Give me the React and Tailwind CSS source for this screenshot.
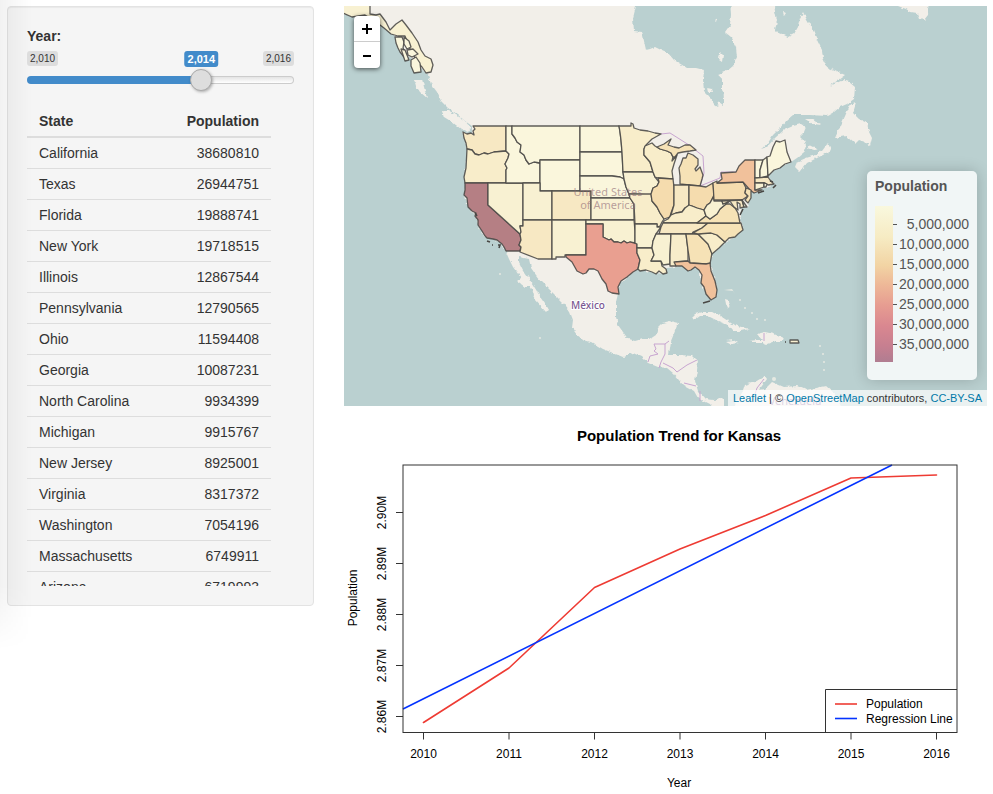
import { useState } from "react";

const STATE_ROWS = [
  ["California", 38680810],
  ["Texas", 26944751],
  ["Florida", 19888741],
  ["New York", 19718515],
  ["Illinois", 12867544],
  ["Pennsylvania", 12790565],
  ["Ohio", 11594408],
  ["Georgia", 10087231],
  ["North Carolina", 9934399],
  ["Michigan", 9915767],
  ["New Jersey", 8925001],
  ["Virginia", 8317372],
  ["Washington", 7054196],
  ["Massachusetts", 6749911],
  ["Arizona", 6719993],
];

const C = {
  a: "#faf6dc",
  b: "#f8f1d2",
  c: "#f8edca",
  d: "#f7e8c3",
  e: "#f6e2b6",
  f: "#f5dcae",
  g: "#f1c19b",
  h: "#e99f90",
  i: "#b57f84",
};

// [name, fill, outline]
const STATES = [
  ["WA", C.d, "463,132 467,134 471,133 474,135 473,131 475,129 473,126 506,126 506,151 494,152 488,154 484,153 479,155 475,154 472,150 467,149 466,143 464,138"],
  ["OR", C.c, "467,149 472,150 475,154 479,155 484,153 488,154 494,152 506,151 509,154 508,158 505,164 507,168 506,170 506,183 465,183 464,177 466,168"],
  ["CA", C.i, "465,183 488,183 488,205 520,234 521,240 519,245 521,247 520,251 506,251 504,247 502,244 497,240 493,239 487,238 485,236 482,231 478,225 478,220 475,216 476,213 472,211 468,207 467,198 464,195 465,190"],
  ["NV", C.b, "488,183 523,183 523,226 520,226 521,232 520,234 488,205"],
  ["ID", C.a, "506,126 512,126 512,134 515,138 517,142 521,145 520,152 524,155 526,160 529,164 534,162 540,163 540,183 506,183 506,170 507,168 505,164 508,158 509,154 506,151"],
  ["MT", C.a, "512,126 580,126 580,160 540,160 540,163 534,162 529,164 526,160 524,155 520,152 521,145 517,142 515,138 512,134"],
  ["WY", C.a, "540,160 580,160 580,191 540,191"],
  ["UT", C.b, "523,183 540,183 540,191 552,191 552,220 523,220"],
  ["CO", C.d, "552,191 591,191 591,220 552,220"],
  ["AZ", C.d, "523,220 552,220 552,259 538,259 520,252 521,247 519,245 521,240 520,234 521,232 520,226 523,226"],
  ["NM", C.b, "552,220 586,220 586,255 565,255 565,257 556,257 556,259 552,259"],
  ["ND", C.a, "580,126 619,126 620,132 621,140 622,152 580,152"],
  ["SD", C.a, "580,152 622,152 623,172 624,179 620,177 612,176 580,176"],
  ["NE", C.a, "580,176 612,176 620,177 624,179 626,187 629,194 630,198 591,198 591,191 580,191"],
  ["KS", C.b, "591,198 630,198 632,201 634,204 634,220 591,220"],
  ["OK", C.b, "586,220 634,220 635,231 635,243 630,242 627,243 624,241 621,243 618,242 614,242 611,239 609,240 603,237 603,224 586,224"],
  ["TX", C.h, "586,224 603,224 603,237 609,240 611,239 614,242 618,242 621,243 624,241 627,243 630,242 637,244 637,253 640,260 638,269 633,272 627,277 621,281 618,287 619,294 612,293 608,291 606,284 602,279 598,271 594,269 589,269 586,273 583,274 577,271 572,262 566,257 566,255 586,255"],
  ["MN", C.c, "619,126 631,126 631,123 633,124 634,128 640,130 648,131 655,133 661,134 652,139 646,145 644,149 644,155 650,162 653,172 623,172 622,152 621,140 620,132"],
  ["IA", C.b, "623,172 653,172 655,177 659,182 657,186 653,188 651,195 629,194 626,187 624,179"],
  ["MO", C.c, "629,194 651,194 652,201 657,207 660,213 664,219 662,222 660,226 657,227 657,224 635,224 634,204 630,198"],
  ["AR", C.b, "635,224 657,224 657,227 661,227 656,234 653,241 652,248 637,248 637,244 635,243"],
  ["LA", C.c, "637,248 652,248 654,255 651,261 661,261 662,266 666,269 667,273 663,274 659,271 656,274 652,272 646,270 640,271 638,269 640,260 637,253"],
  ["WI", C.c, "645,146 652,143 655,146 660,149 667,151 671,153 673,157 672,161 677,155 674,164 672,171 673,179 658,178 655,177 653,172 650,162 644,155 644,149"],
  ["MI-UP", C.e, "657,147 664,144 671,139 668,145 674,147 679,148 685,145 690,145 696,150 690,151 683,152 678,153 675,157 673,157 671,153 667,151 660,149"],
  ["MI", C.e, "680,184 680,176 679,168 681,164 683,158 686,158 688,153 693,155 698,159 698,165 695,169 696,171 700,167 703,175 702,179 700,186 689,185"],
  ["IL", C.f, "658,178 673,179 674,187 674,205 671,213 670,217 664,219 660,213 657,207 652,201 651,194 653,188 657,186 659,182"],
  ["IN", C.d, "674,185 689,185 689,206 685,208 682,212 676,213 671,215 674,205"],
  ["OH", C.f, "689,185 700,186 706,187 713,183 714,195 710,203 707,205 704,210 697,208 692,206 689,206"],
  ["KY", C.c, "664,221 668,219 671,215 676,213 682,212 685,208 689,205 692,206 697,208 704,210 706,216 697,223 663,223"],
  ["TN", C.d, "663,223 708,223 702,228 693,232 692,234 659,234 661,227"],
  ["MS", C.b, "659,234 671,234 670,255 670,264 663,265 661,261 651,261 654,255 652,248 653,241 656,234"],
  ["AL", C.c, "671,234 686,234 688,250 688,261 676,262 676,266 670,266 670,255"],
  ["GA", C.e, "686,234 698,234 702,238 708,244 712,253 710,264 706,264 690,263 688,250"],
  ["FL", C.g, "674,262 688,261 690,263 706,264 710,263 711,271 715,281 717,290 716,297 711,300 706,294 704,287 701,283 702,275 699,270 695,267 691,270 688,271 682,266 676,266"],
  ["SC", C.c, "698,234 704,233 711,233 717,235 725,242 719,248 712,254 708,244 702,238"],
  ["NC", C.e, "693,233 702,228 708,223 741,223 743,230 738,234 735,237 729,238 725,242 717,235 711,233 698,234"],
  ["VA", C.e, "697,223 706,216 710,219 717,214 720,209 726,204 730,204 735,208 738,213 740,223"],
  ["WV", C.b, "704,210 707,205 710,203 714,196 714,201 722,201 723,204 730,201 726,204 720,209 717,214 710,219 706,216"],
  ["PA", C.f, "713,183 717,181 717,183 743,182 746,188 745,193 748,196 742,200 714,200"],
  ["NY", C.g, "717,183 722,179 721,173 736,172 739,166 745,160 755,160 755,190 762,190 754,193 750,190 743,182"],
  ["NJ", C.e, "746,188 751,190 751,198 748,203 745,200 748,196 745,193"],
  ["MD", C.d, "722,201 742,200 744,207 740,208 740,204 737,202 738,210 734,207 730,201 723,204"],
  ["DE", C.a, "742,200 744,207 747,207"],
  ["VT", C.a, "755,160 763,160 760,170 760,178 755,178"],
  ["NH", C.a, "763,160 767,157 768,176 760,178 760,170"],
  ["MA", C.d, "755,178 768,177 770,180 774,184 768,185 765,183 755,183"],
  ["CT", C.b, "755,183 764,183 764,187 755,190"],
  ["RI", C.a, "764,183 767,184 766,187 764,187"],
  ["ME", C.a, "767,157 770,156 773,147 776,141 780,142 785,140 787,152 791,162 785,164 780,168 774,170 768,176"],
  ["AK", C.b, "343,5 370,5 370,14 376,15 380,14 386,22 390,30 396,24 402,20 406,25 412,33 418,42 421,50 425,56 431,59 433,65 431,72 426,73 422,67 417,62 413,54 409,47 405,36 398,36 391,34 384,28 376,22 365,15 352,17 343,13"],
  ["AK-1", C.a, "395,37 402,37 404,42 403,48 406,54 404,57 400,52 398,48 396,43"],
  ["AK-2", C.a, "404,37 409,41 411,47 407,49 404,44"],
  ["AK-3", C.a, "407,50 413,49 418,54 412,57 408,55"],
  ["AK-4", C.a, "411,60 416,57 420,63 421,72 414,73 411,66"],
  ["AK-5", C.a, "401,49 405,50 409,60 405,61"],
  ["PR", C.b, "790,340 798,340 799,343 790,343"],
];

const MAINLAND =
  "330,-10 774,-10 774,6 777,20 775,31 780,33 788,37 794,34 798,27 800,18 803,12 807,20 813,30 817,40 822,50 823,58 827,67 836,71 845,75 838,80 830,86 843,80 849,82 855,87 854,99 847,104 840,107 834,112 827,116 810,115 793,115 787,120 780,128 773,135 768,143 761,149 767,147 775,138 784,130 793,126 801,124 806,127 804,132 800,136 804,140 806,145 803,153 797,158 791,162 785,164 777,168 768,176 774,184 764,188 751,192 751,198 747,207 742,208 740,215 743,230 735,237 725,242 712,254 710,264 715,281 717,296 711,300 704,289 701,282 700,272 695,267 688,271 682,266 667,268 663,274 650,272 638,269 627,277 619,285 618,294 616,302 616,317 618,325 623,332 628,339 635,341 642,339 650,339 656,335 658,327 662,323 670,321 678,323 675,331 671,341 669,355 680,355 693,356 698,361 697,370 695,381 698,391 705,399 714,400 724,397 724,412 716,412 710,404 698,398 694,391 683,385 673,373 667,368 658,367 648,363 642,357 633,353 623,357 613,353 603,349 593,343 583,340 577,335 572,328 573,320 570,312 562,302 550,290 542,282 536,275 531,268 529,259 519,257 519,262 523,270 530,280 538,293 545,303 549,310 546,312 534,299 535,295 530,287 525,287 517,281 521,278 513,267 509,259 506,252 502,244 493,239 485,237 478,225 475,215 468,207 464,192 466,183 464,177 467,160 467,149 463,132 472,134 472,126 465,121 457,114 448,108 441,101 437,92 431,84 428,75 418,66 405,50 396,37 384,28 372,19 352,17 330,10";

const ISLANDS = [
  "414,79 422,79 424,87 427,98 420,92 416,86",
  "442,110 448,110 456,115 464,120 471,128 468,132 461,129 452,122 444,117",
  "795,167 797,162 806,158 816,155 822,151 828,143 831,150 823,155 807,163 800,172",
  "805,119 812,119 820,125 813,124",
  "810,145 818,149 814,150 808,148",
  "850,105 856,103 853,113 859,119 867,123 869,132 872,138 870,146 865,142 859,140 855,144 846,136 835,138 841,125",
  "898,6 906,9 911,12 917,13 919,19 924,20 928,15 929,-4 890,-4",
  "691,318 695,314 703,312 712,312 722,317 734,325 749,329 740,331 733,331 728,325 718,321 708,316 700,316 696,319",
  "749,341 757,340 762,340 757,334 765,332 774,334 783,338 782,341 775,341 767,344 762,342 750,342",
  "726,341 733,340 738,343 732,344",
  "725,299 728,300 731,307 728,309 726,304",
  "733,414 736,402 742,394 745,385 755,382 765,376 767,379 759,390 765,389 772,382 784,387 797,386 806,390 820,387 826,386 834,393 845,414",
];

const BAY =
  "636,-4 636,6 633,18 634,31 642,32 646,50 650,49 655,47 661,50 668,53 674,60 687,68 696,68 704,70 703,80 704,91 710,97 714,104 717,106 719,102 723,105 723,99 725,95 722,90 722,80 719,74 727,71 733,66 737,57 736,47 731,37 725,32 730,25 731,15 730,-4";

function BaseMap() {
  return (
    <svg
      className="block h-full w-full"
      viewBox="344 6 643 400"
      preserveAspectRatio="xMidYMid slice"
      role="img"
      aria-label="Map of population by state"
    >
      <defs>
        <filter id="coast" x="0" y="0" width="100%" height="100%">
          <feTurbulence type="fractalNoise" baseFrequency="0.22" numOctaves="2" seed="4" />
          <feDisplacementMap in="SourceGraphic" scale="4" xChannelSelector="R" yChannelSelector="G" />
        </filter>
      </defs>
      <rect x="330" y="-10" width="680" height="430" fill="#bad0d0" />
      <g filter="url(#coast)" fill="#f2efe9">
        <polygon points={MAINLAND} />
        {ISLANDS.map((p) => (
          <polygon key={p} points={p} />
        ))}
        <polygon points={BAY} fill="#bad0d0" />
        <path d="M707 88l5 1 1 3-5 0zM720 52l3 3-1 7-3-2zM714 20l3-2-1 4zM783 12l3 1-2 3z" />
      </g>
      <g fill="#e5e9e2">
        <circle cx="740" cy="300" r="1" />
        <circle cx="745" cy="308" r="1" />
        <circle cx="752" cy="313" r="1" />
        <circle cx="757" cy="319" r="1" />
        <circle cx="765" cy="320" r="1" />
        <circle cx="820" cy="346" r="1" />
        <circle cx="823" cy="354" r="1" />
        <circle cx="824" cy="362" r="1" />
        <circle cx="824" cy="370" r="1" />
        <circle cx="774" cy="379" r="2" />
        <circle cx="500" cy="274" r="1" />
        <circle cx="540" cy="338" r="1" />
        <path d="M724 290l8-1 3 5-2-3z" />
      </g>
      <path
        d="M661 134l9-1 19 12 14 11 1 17-4 13 15-6 5-2 1-6h15M654 344h11l4-3M665 344v10M654 344l2 5-2 2 4 3-8 2-2 6M665 354l-4 8-2 6M663 363l10 5 4 4 10-7 10-5M684 383l8 2 4 1M700 391v10M764 333v8M764 379l-7 9-2 6"
        fill="none"
        stroke="#c8a5d0"
        strokeWidth="1"
      />
      <g fontFamily="'Noto Sans', sans-serif" textAnchor="middle">
        <text x="588" y="309" fontSize="10" fontWeight="500" fill="#7b5893" stroke="#ffffff" strokeWidth="2" paintOrder="stroke">
          México
        </text>
        <text x="795" y="405" fontSize="11" fill="#8d6ca3">
          Venezuela
        </text>
      </g>
      <g stroke="#494845" strokeOpacity="0.88" strokeWidth="1.3" strokeLinejoin="round">
        {STATES.map(([name, fill, points]) => (
          <polygon key={name} points={points} fill={fill} />
        ))}
      </g>
      <path
        d="M487 241l3 1M492 245l1 0M498 245l2 0-1 3M776 185l-3 3M773 182l-3-1M703 303l7-2M785 342h1M475 213l2 3M758 193l6-2M743 209l-3 6"
        fill="none"
        stroke="#494845"
        strokeWidth="1.6"
      />
      <g fontFamily="'Noto Sans', sans-serif" fontSize="11" textAnchor="middle" fill="#8b6672" fillOpacity="0.6">
        <text x="608" y="196">United States</text>
        <text x="608" y="209">of America</text>
      </g>
    </svg>
  );
}

const LEGEND_LABELS = ["5,000,000", "10,000,000", "15,000,000", "20,000,000", "25,000,000", "30,000,000", "35,000,000"];

function MapPanel() {
  return (
    <section className="relative h-[400px] overflow-hidden">
      <BaseMap />
      <div className="absolute top-[10px] left-[10px] flex w-[26px] flex-col overflow-hidden rounded bg-white shadow-[0_1px_5px_rgba(0,0,0,0.65)]">
        <button type="button" aria-label="Zoom in" className="flex h-[26px] items-center justify-center border-b border-[#ccc]">
          <svg viewBox="0 0 12 12" className="size-3"><path d="M6 1v10M1 6h10" stroke="#000" strokeWidth="2" /></svg>
        </button>
        <button type="button" aria-label="Zoom out" className="flex h-[26px] items-center justify-center">
          <svg viewBox="0 0 12 12" className="size-3"><path d="M2 7h8" stroke="#000" strokeWidth="2" /></svg>
        </button>
      </div>
      <div className="absolute right-[10px] bottom-[26px] h-[209px] w-[110px] rounded-[5px] bg-white/80 px-2 py-[6px] text-sm text-[#555] shadow-[0_0_15px_rgba(0,0,0,0.2)]">
        <h2 className="leading-[18px] font-bold">Population</h2>
        <div className="mt-[11px] flex">
          <div className="h-[156px] w-[18px] bg-[linear-gradient(#f9f8de,#f6ebc3_20%,#f2d4a4_38%,#eeb998_50%,#e69c91_64%,#d98790_77%,#c67f90_90%,#b07d91)]" />
          <ul className="flex-1 pt-2">
            {LEGEND_LABELS.map((label) => (
              <li key={label} className="flex h-5 items-center justify-between">
                <span className="h-px w-1 bg-[#555]" />
                <span className="leading-5">{label}</span>
              </li>
            ))}
          </ul>
        </div>
      </div>
      <div className="absolute right-0 bottom-0 bg-white/70 px-[5px] text-[11px] leading-4 whitespace-nowrap text-[#333]">
        <a href="#leaflet" className="text-[#0078a8]">Leaflet</a> | ©{" "}
        <a href="#osm" className="text-[#0078a8]">OpenStreetMap</a> contributors,{" "}
        <a href="#license" className="text-[#0078a8]">CC-BY-SA</a>
      </div>
    </section>
  );
}

const YEARS = [
  [2010, 423.5], [2011, 509], [2012, 594.5], [2013, 680], [2014, 765.5], [2015, 851], [2016, 936.5],
];
const LEVELS = [
  ["2.86M", 716.5], ["2.87M", 665.5], ["2.88M", 614.5], ["2.89M", 563.5], ["2.90M", 512.5],
];

function TrendChart() {
  return (
    <svg
      className="block h-auto w-full"
      viewBox="344 406 643 388"
      fontFamily="'Liberation Sans', Arial, sans-serif"
      fontSize="12"
      role="img"
      aria-label="Population Trend for Kansas"
    >
      <text x="679" y="441" fontSize="15" fontWeight="700" textAnchor="middle">Population Trend for Kansas</text>
      <g fill="none" strokeWidth="1.6" strokeLinecap="round" strokeLinejoin="round">
        <polyline stroke="#ee3b33" points="423.5,722.5 509,668 594.5,587.5 680,549 765.5,515.5 851,478 936.5,475" />
        <path stroke="#0433ff" strokeLinecap="butt" d="M403 709L892 465" />
      </g>
      <g fill="none" stroke="#333" strokeWidth="1">
        <rect x="403" y="465" width="554" height="267.5" />
        <path d="M825.5 732.5V689.5H957" />
        {YEARS.map(([year, x]) => <path key={year} d={`M${x} 732.5v7`} />)}
        {LEVELS.map(([label, y]) => <path key={label} d={`M396 ${y}h7`} />)}
      </g>
      <path d="M835 704h22" stroke="#ee3b33" strokeWidth="1.6" />
      <path d="M835 718.5h22" stroke="#0433ff" strokeWidth="1.6" />
      <text x="866" y="708">Population</text>
      <text x="866" y="723">Regression Line</text>
      <g textAnchor="middle">
        {YEARS.map(([year, x]) => <text key={year} x={x} y="758">{year}</text>)}
        <text x="679" y="787">Year</text>
        {LEVELS.map(([label, y]) => (
          <text key={label} transform={`translate(386 ${y}) rotate(-90)`}>{label}</text>
        ))}
        <text transform="translate(357 598) rotate(-90)">Population</text>
      </g>
    </svg>
  );
}

function YearSlider() {
  const [year, setYear] = useState(2014);
  const ratio = (year - 2010) / 6;
  const center = `calc(11px + (100% - 22px) * ${ratio})`;
  return (
    <div>
      <label htmlFor="year" className="block text-sm leading-5 font-bold">Year:</label>
      <div className="relative mt-[5px] flex justify-between text-[10px] leading-[15px]">
        <span className="rounded-[3px] bg-[#ddd] px-[3px]">2,010</span>
        <span className="rounded-[3px] bg-[#ddd] px-[3px]">2,016</span>
        <output
          htmlFor="year"
          className="absolute top-0 -translate-x-1/2 rounded-[3px] bg-[#428bca] px-[3px] text-[11px] leading-4 font-bold text-white"
          style={{ left: center }}
        >
          {year.toLocaleString("en-US")}
        </output>
      </div>
      <input
        id="year"
        type="range"
        min="2010"
        max="2016"
        value={year}
        onChange={(e) => setYear(Number(e.target.value))}
        className="mt-[10px] block h-2 w-full appearance-none rounded-lg border border-transparent [&::-webkit-slider-thumb]:size-[22px] [&::-webkit-slider-thumb]:appearance-none [&::-webkit-slider-thumb]:rounded-full [&::-webkit-slider-thumb]:border [&::-webkit-slider-thumb]:border-[#aaa] [&::-webkit-slider-thumb]:bg-[#ddd] [&::-webkit-slider-thumb]:shadow-[1px_1px_3px_rgba(0,0,0,0.3)]"
        style={{
          background: `linear-gradient(#428bca, #428bca) left / ${center} 100% no-repeat border-box, linear-gradient(#e4e4e4, #fff) padding-box, linear-gradient(#ccc, #ccc) border-box`,
        }}
      />
    </div>
  );
}

export default function App() {
  return (
    <main className="relative flex items-start gap-[30px] bg-white pt-[6px] pr-[6px] pl-[7px] font-['Liberation_Sans',Arial,sans-serif] text-[#333]">
      <div className="pointer-events-none absolute top-0 left-0 h-[650px] w-8 bg-linear-to-r from-black/5 to-transparent [mask-image:linear-gradient(black_90%,transparent)]" />
      <aside className="w-[307px] shrink-0 rounded border border-[#e3e3e3] bg-[#f5f5f5] p-[19px] shadow-[inset_0_1px_1px_rgba(0,0,0,0.05)]">
        <YearSlider />
        <div className="mt-[22px] h-[480px] overflow-y-auto [scrollbar-width:none]">
          <table className="w-[244px] border-separate border-spacing-0 text-sm leading-5">
            <thead>
              <tr>
                <th className="border-b-2 border-[#ddd] px-3 py-[5px] text-left">State</th>
                <th className="border-b-2 border-[#ddd] px-3 py-[5px] text-right">Population</th>
              </tr>
            </thead>
            <tbody>
              {STATE_ROWS.map(([name, population]) => (
                <tr key={name}>
                  <td className="border-b border-[#ddd] px-3 py-[5px]">{name}</td>
                  <td className="border-b border-[#ddd] px-3 py-[5px] text-right">{population}</td>
                </tr>
              ))}
            </tbody>
          </table>
        </div>
      </aside>
      <div className="min-w-0 flex-1">
        <MapPanel />
        <TrendChart />
      </div>
    </main>
  );
}
